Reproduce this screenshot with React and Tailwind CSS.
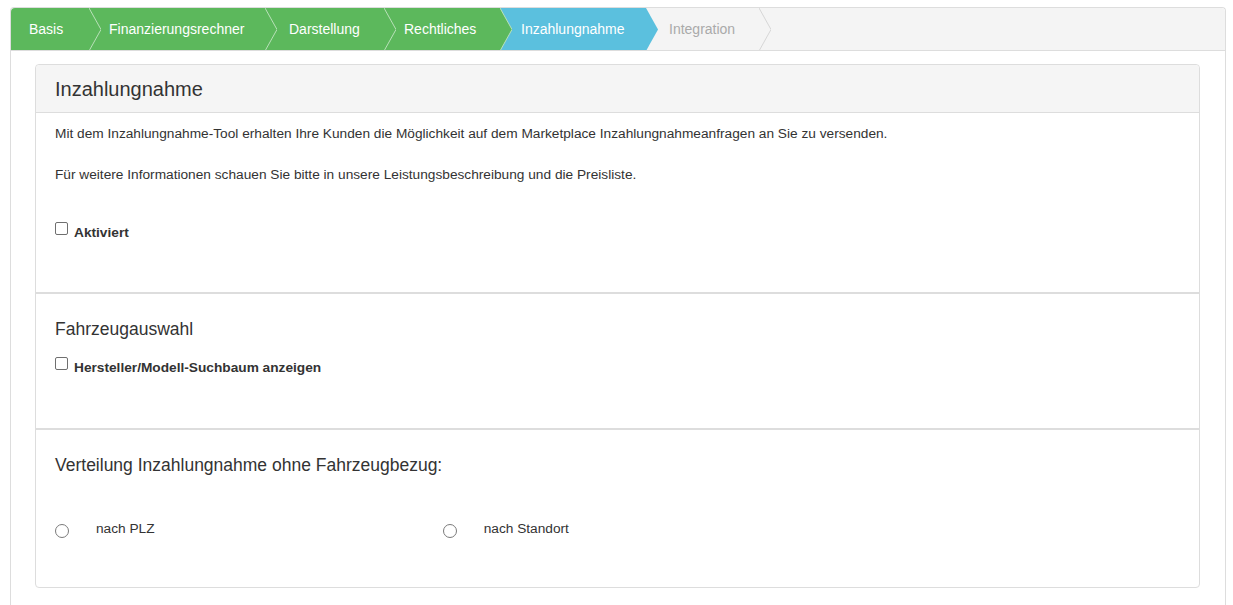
import React from 'react';

const GREEN = '#5cb85c';
const BLUE = '#5bc0de';
const GRAY = '#f4f4f4';

const tabs = [
    { label: 'Basis', w: 78, pl: 18, bg: GREEN, text: 'text-white' },
    { label: 'Finanzierungsrechner', w: 164, pl: 8, bg: GREEN, text: 'text-white' },
    { label: 'Darstellung', w: 107, pl: 12, bg: GREEN, text: 'text-white' },
    { label: 'Rechtliches', w: 104, pl: 8, bg: GREEN, text: 'text-white' },
    { label: 'Inzahlungnahme', w: 134, pl: 9, bg: BLUE, text: 'text-white' },
    { label: 'Integration', w: 101, pl: 11, bg: GRAY, text: 'text-[#aaaaaa]' },
];

// separator between two steps: arrow of the left colour pointing into the right one
const Chevron = ({ left, right, line }) => (
    <svg width="12" height="43" viewBox="0 0 12 43" className="block shrink-0">
        <rect x="0" y="0" width="12" height="43" fill={right} />
        <polygon points="0,0 12,21.5 0,43" fill={left} />
        {line && <polyline points="0,0 12,21.5 0,43" fill="none" stroke={line} strokeWidth="1" />}
    </svg>
);

const Checkbox = () => (
    <span className="-mt-[1px] block h-[13px] w-[13px] shrink-0 rounded-[2px] border border-[#6f6f6f] bg-white" />
);

const Radio = () => (
    <span className="block h-[14px] w-[14px] shrink-0 rounded-full border border-[#7a7a7a] bg-white" />
);

const StepBar = () => (
    <div className="flex h-[43px] items-stretch overflow-hidden rounded-t-[4px] border-b border-[#dddddd] bg-[#f4f4f4] text-[14px]">
        {tabs.map((t, i) => {
            const next = tabs[i + 1];
            let line = null;
            if (t.bg === GREEN) line = '#b9e0b9';
            if (t.bg === GRAY) line = '#d6d6d6';
            return (
                <React.Fragment key={t.label}>
                    <div
                        className={`flex shrink-0 items-center ${t.text}`}
                        style={{ width: t.w, paddingLeft: t.pl, background: t.bg }}
                    >
                        {t.label}
                    </div>
                    <Chevron left={t.bg} right={next ? next.bg : GRAY} line={line} />
                </React.Fragment>
            );
        })}
        <div className="flex-1" />
    </div>
);

const App = () => {
    return (
        <div className="min-h-[605px] bg-white pt-[7px] text-[#333333]" style={{ fontFamily: '"Liberation Sans", Arial, sans-serif' }}>
            <div className="ml-[10px] w-[1216px] rounded-t-[4px] border border-b-0 border-[#dddddd] bg-white">
                <StepBar />
                <div className="pb-[30px] pl-[24px] pr-[25px] pt-[13px]">
                    <div className="rounded-[4px] border border-[#dddddd]">
                        <div className="flex h-[48px] items-center rounded-t-[4px] border-b border-[#dddddd] bg-[#f5f5f5] px-[19px] text-[20px]">
                            Inzahlungnahme
                        </div>

                        <div className="px-[19px] pb-[49px] pt-[11px] text-[13.7px]">
                            <p className="leading-[20px]">
                                Mit dem Inzahlungnahme-Tool erhalten Ihre Kunden die Möglichkeit auf dem Marketplace Inzahlungnahmeanfragen an Sie zu versenden.
                            </p>
                            <p className="mt-[21px] leading-[20px]">
                                Für weitere Informationen schauen Sie bitte in unsere Leistungsbeschreibung und die Preisliste.
                            </p>
                            <label className="mt-[38px] flex h-[20px] items-start gap-[6px] font-bold">
                                <Checkbox />
                                <span className="mt-[3px] leading-[14px]">Aktiviert</span>
                            </label>
                        </div>

                        <div className="border-t-2 border-[#dddddd] px-[19px] pb-[50px] pt-[23px]">
                            <h4 className="text-[17.5px] leading-[24px]">Fahrzeugauswahl</h4>
                            <label className="mt-[17px] flex h-[20px] items-start gap-[6px] text-[13.7px] font-bold">
                                <Checkbox />
                                <span className="mt-[3px] leading-[14px]">Hersteller/Modell-Suchbaum anzeigen</span>
                            </label>
                        </div>

                        <div className="border-t-2 border-[#dddddd] pb-[46px] pt-[23px]">
                            <h4 className="px-[19px] text-[17.5px] leading-[24px]">Verteilung Inzahlungnahme ohne Fahrzeugbezug:</h4>
                            <div className="mt-[44px] grid grid-cols-3 text-[13.7px]">
                                <label className="flex h-[20px] items-center px-[19px]">
                                    <Radio />
                                    <span className="-mt-[3px] ml-[27px]">nach PLZ</span>
                                </label>
                                <label className="flex h-[20px] items-center px-[19px]">
                                    <Radio />
                                    <span className="-mt-[3px] ml-[27px]">nach Standort</span>
                                </label>
                                <div />
                            </div>
                        </div>
                    </div>
                </div>
            </div>
        </div>
    );
};

export default App;
